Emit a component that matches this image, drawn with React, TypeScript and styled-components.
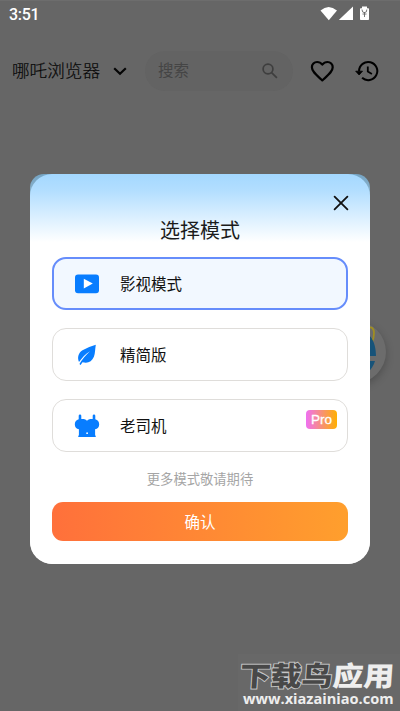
import React from "react";
import styled, { createGlobalStyle } from "styled-components";

const GlobalStyle = createGlobalStyle`
  * { box-sizing: border-box; }
  body { margin: 0; background: #666; font-family: Roboto, "Noto Sans CJK SC", sans-serif; }
  button { font: inherit; border: 0; padding: 0; background: none; }
  svg { display: block; flex: none; }
`;

const Screen = styled.main`
  position: relative;
  width: 400px;
  height: 711px;
  overflow: hidden;
  background: #666;
  border-top: 1px solid #6d6d6d;
`;

const StatusBar = styled.header`
  display: flex;
  align-items: center;
  height: 26px;
  padding: 0 30px 0 9px;
`;

const Clock = styled.span`
  flex: 1;
  color: #fff;
  font: 500 16px/27px Roboto, sans-serif;
  letter-spacing: -0.3px;
`;

const Toolbar = styled.nav`
  display: flex;
  align-items: center;
  height: 40px;
  margin-top: 24px;
  padding: 0 20px 0 12px;
`;

const BrowserName = styled.span`
  width: 101px;
  color: #090909;
  font-size: 17.6px;
  font-weight: 300;
  -webkit-text-stroke: 0.2px #090909;
  line-height: 40px;
  white-space: nowrap;
`;

const Search = styled.div`
  display: flex;
  align-items: center;
  justify-content: space-between;
  width: 148px;
  height: 40px;
  margin: 0 17px 0 18px;
  padding: 0 14px 0 13px;
  border-radius: 20px;
  background: #636363;
  color: #454545;
  font-size: 15.5px;
  line-height: 40px;
`;

const SearchPlaceholder = styled.span`
  height: 40px;
`;

const HistoryButton = styled.button`
  margin-left: 21px;
`;

const Floating = styled.div`
  position: absolute;
  left: 324px;
  top: 320px;
  width: 62px;
  height: 62px;
  border-radius: 50%;
  background: #6c6c6c;
  box-shadow: 0 3px 8px rgba(0, 0, 0, 0.24);
`;

const Dialog = styled.section`
  position: absolute;
  left: 30px;
  top: 173px;
  width: 340px;
  height: 390px;
  border-radius: 14px 14px 23px 23px;
  background: linear-gradient(#75a5c5, #99b9cc 30px, #fff 31px);
`;

const DialogSurface = styled.div`
  height: 100%;
  display: flex;
  flex-direction: column;
  padding: 17px 22px 22px;
  border-radius: 22px;
  background: linear-gradient(#a4d8ff 0, #b2deff 16px, #fff 68px);
`;

const CloseButton = styled.button`
  align-self: flex-end;
  width: 24px;
  height: 24px;
  margin-right: -5px;
`;

const Title = styled.h1`
  margin: 1px 0 11px;
  color: #1b1b1b;
  font-size: 20px;
  font-weight: 400;
  line-height: 30px;
  text-align: center;
`;

const Options = styled.div`
  display: grid;
  gap: 18px;
`;

const Option = styled.button<{ $selected?: boolean }>`
  display: flex;
  align-items: center;
  width: 296px;
  height: 53px;
  padding: 0 ${p => (p.$selected ? "20px" : "21px")};
  border: ${p => (p.$selected ? "2px solid #668dfb" : "1px solid #dfddda")};
  border-radius: 14px;
  background: ${p => (p.$selected ? "#f2f8ff" : "#fff")};
  color: #111;
  font-size: 15.5px;
  text-align: left;
`;

const OptionLabel = styled.span`
  flex: 1;
  margin-left: 20px;
  padding-bottom: 2px;
`;

const ProBadge = styled.span`
  align-self: flex-start;
  width: 31px;
  height: 19px;
  margin: 10px -11px 0 0;
  border-radius: 4px;
  background: linear-gradient(90deg, #ef70f2, #ffb000);
  color: #fff;
  font: 400 13.5px/20px "Liberation Sans", sans-serif;
  -webkit-text-stroke: 0.3px #fff;
  text-align: center;
`;

const Hint = styled.p`
  margin: 17px 0 12px;
  color: #a5a5a5;
  font-size: 13.3px;
  line-height: 21px;
  text-align: center;
`;

const Confirm = styled.button`
  height: 39px;
  flex: none;
  padding-bottom: 2px;
  border-radius: 11px;
  background: linear-gradient(90deg, #ff703b, #ff9f2d);
  color: #fff;
  font-size: 15.5px;
`;

const Watermark = styled.footer`
  position: absolute;
  left: 238px;
  top: 653px;
  width: 162px;
  height: 57px;
  background: #686868;
`;

const BrandName = styled.div`
  display: flex;
  width: 150px;
  height: 31px;
  margin: 5px 0 0 2px;
  font: 900 30px/31px "Noto Sans CJK SC", sans-serif;
  white-space: nowrap;
  transform: skewX(-4deg) scale(1.03, 0.91);
  transform-origin: left center;
`;

const BrandPart = styled.span<{ $dark?: boolean }>`
  color: ${p => (p.$dark ? "#484848" : "#eee")};
  -webkit-text-stroke: ${p => (p.$dark ? "2px #c5c5c5" : "0")};
  paint-order: stroke fill;
`;

const Website = styled.div`
  width: 152px;
  margin: 0 0 0 5px;
  color: #eee;
  font: 700 14.6px/16px "Open Sans", sans-serif;
  white-space: nowrap;
`;

function StatusIcons() {
  return (
    <svg width="50" height="18" viewBox="0 0 50 18" fill="#fff">
      <path d="M.5 5.5Q8.5-1.7 17 5.5L8.8 15.2Z" />
      <path d="M33 1.5V15H18.8Z" />
      <path d="M42 1.5h5v1.7h1.3q.7 0 .7.8v10.3q0 .8-.8.8h-7.4q-.8 0-.8-.8V4q0-.8.8-.8H42z" />
      <path d="m42 4.5.6 2.4 1.8.8 2-.9.4-2.3M44.5 7v5M42.5 9h4" fill="none" stroke="#686868" strokeWidth=".9" />
    </svg>
  );
}

function Chevron() {
  return <svg width="14" height="14" viewBox="0 0 14 14" fill="none" stroke="#050505" strokeWidth="2.2"><path d="m1.2 4.3 5.8 5.5 5.8-5.5" /></svg>;
}

function SearchIcon() {
  return <svg width="18" height="18" viewBox="0 0 18 18" fill="none" stroke="#3e3e3e" strokeWidth="1.7"><circle cx="7" cy="7" r="4.9" /><path d="m10.6 10.6 5.3 5.3" /></svg>;
}

function HeartIcon() {
  return <svg width="24" height="24" viewBox="0 0 24 24" fill="none" stroke="#000" strokeWidth="2.2" strokeLinejoin="round"><path d="m12.3 21.4-1.3-1.2C5.6 15.4 1.9 12.4 1.9 8.3A5.2 5.2 0 0 1 7.1 3c2 0 3.9 1 5.2 2.7C13.6 4 15.5 3 17.5 3a5.2 5.2 0 0 1 5.2 5.3c0 4.1-3.7 7.1-9.1 11.9Z" /></svg>;
}

function HistoryIcon() {
  return <svg width="24" height="24" viewBox="0 0 24 24" fill="none" stroke="#000" strokeWidth="2"><path d="M4.1 12a9.1 9.1 0 1 1 3 6.8" /><path d="M.7 12.2h6.8L4.1 16Z" fill="#000" strokeWidth=".8" /><path d="M12.8 7.4v5.2l4.1 2.4" strokeWidth="1.8" /></svg>;
}

function CloseIcon() {
  return <svg width="24" height="24" viewBox="0 0 24 24" fill="none" stroke="#111" strokeWidth="1.8" strokeLinecap="round"><path d="m5.6 5.6 12.8 12.8M18.4 5.6 5.6 18.4" /></svg>;
}

function VideoIcon() {
  return <svg width="26" height="26" viewBox="0 0 26 26"><rect x="1" y="3.4" width="24" height="18.8" rx="3" fill="#087dff" /><path d="m9.8 7.8 9 4.8-9 4.8Z" fill="#fff" /></svg>;
}

function LeafIcon() {
  return <svg width="26" height="26" viewBox="0 0 26 26" fill="#087dff"><path d="M21.8 2.7Q13.5 5.1 8.5 8.2C4.3 11 3.1 15.2 5 20.1 8.2 15.8 11.2 12 16 9.3 11.7 13.2 8.3 17 5.4 22l1.2.9 1.9-2.7c5.2 1.4 9.3-.3 11.4-5.4C21.3 11.3 21 7 21.8 2.7Z" /></svg>;
}

function TopIcon() {
  return <svg width="26" height="26" viewBox="0 0 26 26" fill="#087dff"><path d="M4.7 2.8q0-1.3 1.3-1.3t1.3 1.3V6c2.8-.1 4.9 .2 5.7 2.1.8-1.9 2.9-2.2 5.7-2.1V2.8q0-1.3 1.3-1.3t1.3 1.3v3.4c2.4.6 3.9 2.4 3.9 5 0 2.9-1.6 4.8-4.1 5.1v5.4l.8 2.3H4.1l.8-2.3v-5.4c-2.5-.3-4.1-2.2-4.1-5.1 0-2.6 1.5-4.4 3.9-5Z" /><circle cx="13.1" cy="20.2" r=".9" fill="#fff" /></svg>;
}

function BrowserMark() {
  return <svg width="62" height="62" viewBox="0 0 62 62"><path d="M44 7c4-2 6 1 6 5 0 3-.5 6-2 9" fill="none" stroke="#a08e20" strokeWidth="1.8" /><path fillRule="evenodd" d="M31 9c14 0 21 10 21 26H22c1 6 4 9 9 9 4 0 7-1 8-4h12c-3 10-10 15-20 15-13 0-22-9-22-23S18 9 31 9Zm-9 18h19c-1-6-4-9-10-9-5 0-8 3-9 9Z" fill="#175379" /></svg>;
}

export default function App() {
  return (
    <>
      <GlobalStyle />
      <Screen>
        <StatusBar><Clock>3:51</Clock><StatusIcons /></StatusBar>
        <Toolbar>
          <BrowserName>哪吒浏览器</BrowserName><Chevron />
          <Search><SearchPlaceholder>搜索</SearchPlaceholder><SearchIcon /></Search>
          <button aria-label="收藏"><HeartIcon /></button>
          <HistoryButton aria-label="历史"><HistoryIcon /></HistoryButton>
        </Toolbar>
        <Floating><BrowserMark /></Floating>
        <Dialog role="dialog" aria-label="选择模式">
          <DialogSurface>
            <CloseButton aria-label="关闭"><CloseIcon /></CloseButton>
            <Title>选择模式</Title>
            <Options>
              <Option $selected><VideoIcon /><OptionLabel>影视模式</OptionLabel></Option>
              <Option><LeafIcon /><OptionLabel>精简版</OptionLabel></Option>
              <Option><TopIcon /><OptionLabel>老司机</OptionLabel><ProBadge>Pro</ProBadge></Option>
            </Options>
            <Hint>更多模式敬请期待</Hint>
            <Confirm>确认</Confirm>
          </DialogSurface>
        </Dialog>
        <Watermark>
          <BrandName><BrandPart $dark>下载鸟</BrandPart><BrandPart>应用</BrandPart></BrandName>
          <Website>www.xiazainiao.com</Website>
        </Watermark>
      </Screen>
    </>
  );
}
